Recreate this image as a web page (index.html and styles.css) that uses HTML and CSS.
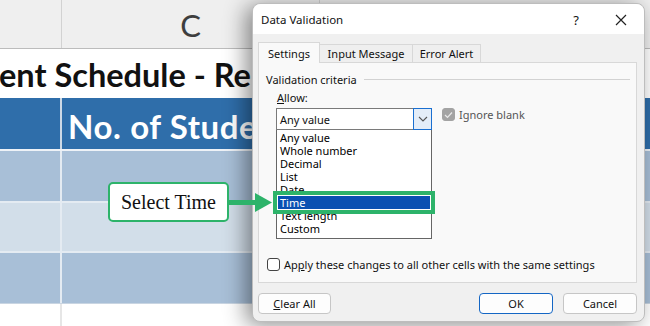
FILE: index.html
```html
<!DOCTYPE html>
<html>
<head>
<meta charset="utf-8">
<link rel="stylesheet" href="styles.css">
</head>
<body>
<div class="sheet">
  <div class="row colhdr">
    <div class="cell a"></div>
    <div class="cell c">C</div>
    <div class="cell rest"></div>
  </div>
  <div class="row title"><span class="title-text">ent Schedule - Re</span></div>
  <div class="row hdr">
    <div class="cell a"></div>
    <div class="cell b">No. of Stude</div>
  </div>
  <div class="row band dark"><div class="cell a"></div><div class="cell b"></div></div>
  <div class="row band light"><div class="cell a"></div><div class="cell b"></div></div>
  <div class="row band dark last"><div class="cell a"></div><div class="cell b"></div></div>
  <div class="row blank"><div class="cell a"></div><div class="cell b"></div></div>
</div>

<div class="dialog">
  <div class="titlebar">
    <span class="dlg-title">Data Validation</span>
    <span class="help">?</span>
    <span class="close">
      <svg width="14" height="14" viewBox="0 0 14 14"><path d="M2 2 L12 12 M12 2 L2 12" stroke="#222" stroke-width="1.2" fill="none"/></svg>
    </span>
  </div>
  <div class="dlg-body">
    <div class="tabs">
      <div class="tab active">Settings</div>
      <div class="tab t2">Input Message</div>
      <div class="tab t3">Error Alert</div>
    </div>
    <div class="panel">
      <div class="group-head"><span>Validation criteria</span><span class="rule"></span></div>
      <div class="criteria">
        <div class="allow-col">
          <div class="lbl"><u>A</u>llow:</div>
          <div class="combo">
            <span class="combo-val">Any value</span>
            <span class="combo-btn">
              <svg width="10" height="6" viewBox="0 0 10 6"><path d="M1 1 L5 5 L9 1" stroke="#555" stroke-width="1.1" fill="none"/></svg>
            </span>
          </div>
          <div class="list">
            <div class="item">Any value</div>
            <div class="item">Whole number</div>
            <div class="item">Decimal</div>
            <div class="item">List</div>
            <div class="item">Date</div>
            <div class="item sel">Time</div>
            <div class="item">Text length</div>
            <div class="item">Custom</div>
            <div class="frame"></div>
          </div>
        </div>
        <div class="ignore">
          <span class="chk on">
            <svg width="9" height="8" viewBox="0 0 9 8"><path d="M1 4 L3.5 6.5 L8 1.5" stroke="#e8e8e8" stroke-width="1.2" fill="none"/></svg>
          </span>
          <span class="ign-text">Ignore blank</span>
        </div>
      </div>
      <div class="apply">
        <span class="chk"></span>
        <span>Ap<u>p</u>ly these changes to all other cells with the same settings</span>
      </div>
    </div>
    <div class="buttons">
      <div class="btn"><u>C</u>lear All</div>
      <div class="spacer"></div>
      <div class="btn ok">OK</div>
      <div class="btn">Cancel</div>
    </div>
  </div>
</div>

<div class="callout">Select Time</div>
<svg class="arrow" width="44" height="24" viewBox="0 0 44 24">
  <rect x="0" y="9" width="28" height="5" fill="#2db36a"/>
  <polygon points="26,2 43,11.5 26,21" fill="#2db36a"/>
</svg>
</body>
</html>
```

FILE: styles.css
```css
* { box-sizing: border-box; }
html, body { margin: 0; padding: 0; }
body {
  width: 650px;
  height: 326px;
  overflow: hidden;
  position: relative;
  background: #fff;
  font-family: "Noto Sans", "Open Sans", sans-serif;
}

/* ---------- spreadsheet ---------- */
.sheet { display: flex; flex-direction: column; width: 650px; }
.row { display: flex; width: 100%; }
.cell.a { width: 62px; flex: none; }

.colhdr { height: 49px; background: #efefef; border-bottom: 1px solid #bcbcbc; }
.colhdr .cell.a { border-right: 1px solid #d2d2d2; }
.colhdr .cell.c {
  width: 258px; flex: none;
  border-right: 1px solid #d2d2d2;
  font-family: "Lato", "Open Sans", sans-serif;
  font-size: 31px; color: #3e3e3e;
  display: flex; align-items: center; justify-content: center;
  padding-top: 2px;
}
.colhdr .cell.rest { flex: 1; }

.title { height: 49px; background: #fff; align-items: center; }
.title-text {
  font-family: "Lato", "Open Sans", sans-serif;
  font-weight: 700; font-size: 32.5px; color: #111;
  white-space: nowrap; margin-left: -1px; padding-top: 2px;
}

.hdr { height: 53px; background: #2f6eaa; border-bottom: 2px solid #eef2f7; }
.hdr .cell.a { border-right: 2px solid #cdd9e6; }
.hdr .cell.b {
  flex: 1; white-space: nowrap; overflow: hidden;
  font-family: "Lato", "Open Sans", sans-serif;
  font-weight: 700; font-size: 33px; letter-spacing: 0.6px; color: #fff;
  display: flex; align-items: center; padding-left: 6px; padding-top: 4px;
}

.band { height: 52px; border-bottom: 2px solid #e4ebf2; }
.band.light { height: 50px; }
.band.last { height: 51px; border-bottom: 1px solid #c9d5e2; }
.band.dark { background: #a8bfd7; }
.band.light { background: #d2dee9; }
.band .cell.a { border-right: 2px solid #e4ebf2; }
.blank { height: 30px; background: #fff; }
.blank .cell.a { border-right: 2px solid #e6e6e6; }

/* ---------- dialog ---------- */
.dialog {
  position: absolute;
  left: 252px; top: 3px;
  width: 393px; height: 319px;
  border: 1px solid #bdbdbd;
  border-radius: 8px;
  background: #f0f0f0;
  box-shadow: -6px 3px 22px rgba(0,0,0,0.45);
  display: flex; flex-direction: column;
  font-size: 11px; color: #111;
}
.titlebar {
  height: 30px; flex: none;
  background: #fff;
  border-radius: 8px 8px 0 0;
  display: flex; align-items: center;
  padding-left: 8px; padding-top: 1px;
}
.dlg-title { font-size: 11.5px; }
.help { margin-left: auto; font-size: 13px; width: 14px; text-align: center; margin-right: 31px; }
.close { width: 14px; height: 14px; margin-right: 16px; display: flex; }

.dlg-body { flex: 1; display: flex; flex-direction: column; padding: 8px 7px 0 5px; }
.tabs { display: flex; align-items: flex-end; height: 20px; }
.tab {
  height: 18px; border: 1px solid #d8d8d8; border-bottom: none;
  background: #efefef; font-size: 11px;
  display: flex; align-items: center; justify-content: center;
}
.tab.active { height: 21px; width: 62px; background: #f9f9f9; position: relative; z-index: 1; margin-bottom: -1px; }
.tab.t2 { width: 93px; border-left: none; }
.tab.t3 { width: 68px; border-left: none; }

.panel {
  height: 221px; flex: none;
  border: 1px solid #d8d8d8;
  background: #f9f9f9;
  display: flex; flex-direction: column;
  padding: 9px 6px 0 7px;
}
.group-head { display: flex; align-items: center; gap: 7px; height: 15px; }
.rule { flex: 1; height: 1px; background: #d2d2d2; }

.criteria { display: flex; margin-top: 3px; }
.allow-col { margin-left: 10px; width: 156px; flex: none; }
.lbl { height: 16px; padding-left: 1px; line-height: 16px; }
.combo {
  margin-top: 2px;
  height: 22px; display: flex; align-items: stretch;
  border: 1px solid #7a7a7a; background: #fff;
}
.combo-val { flex: 1; padding-left: 3px; display: flex; align-items: center; }
.combo-btn {
  width: 19px; border: 1px solid #1a6fd0; margin: -1px -1px -1px 0;
  background: #e4edf8; display: flex; align-items: center; justify-content: center;
}
.list {
  position: relative;
  border: 1px solid #666; border-top: none;
  background: #fff;
  padding: 1px 1px 3px 1px;
}
.item { height: 13px; line-height: 13px; padding-left: 2px; font-size: 11px; color: #000; }
.item.sel { background: #0a50b2; color: #fff; }
.frame {
  position: absolute;
  left: -4px; top: 61px;
  width: 162px; height: 23px;
  border: 4px solid #2db36a;
}
.ignore { display: flex; align-items: center; gap: 4px; margin-left: 10px; margin-top: 18px; height: 13px; }
.ign-text { color: #555; }

.chk {
  width: 13px; height: 13px; flex: none;
  border: 1px solid #444; border-radius: 3px; background: #fff;
  display: flex; align-items: center; justify-content: center;
}
.chk.on { background: #a3a3a3; border-color: #a3a3a3; }

.apply { display: flex; align-items: center; gap: 4px; margin-top: auto; margin-bottom: 10px; margin-left: 1px; }

.buttons { display: flex; margin-top: 10px; gap: 10px; }
.spacer { flex: 1; }
.btn {
  width: 74px; height: 21px;
  border: 1px solid #c6c6c6; border-radius: 4px;
  background: #fdfdfd;
  display: flex; align-items: center; justify-content: center;
  font-size: 11px;
}
.btn:first-child { width: 73px; }
.btn.ok { border-color: #1466c4; }

/* ---------- annotation ---------- */
.callout {
  position: absolute;
  left: 108px; top: 182px;
  width: 121px; height: 40px;
  border: 2px solid #2db36a; border-radius: 5px;
  background: #fff;
  font-family: "Liberation Serif", serif;
  font-size: 20px; color: #111;
  display: flex; align-items: center; justify-content: center;
}
.arrow { position: absolute; left: 229px; top: 191px; }
```
